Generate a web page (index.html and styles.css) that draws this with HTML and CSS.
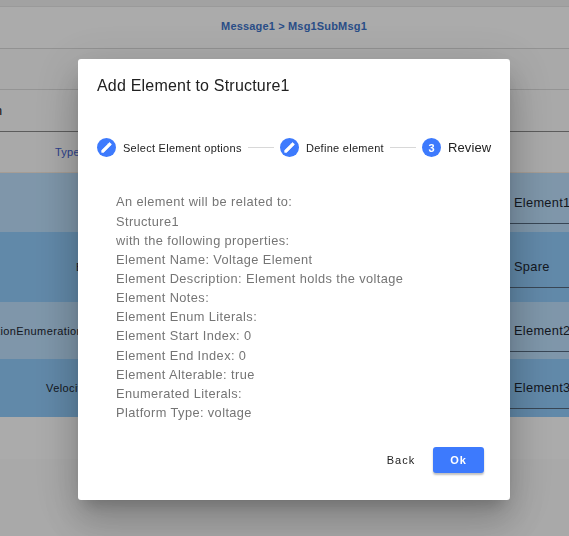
FILE: index.html
```html
<!DOCTYPE html>
<html lang="en">
<head>
<meta charset="utf-8">
<title>Add Element to Structure1</title>
<link rel="stylesheet" href="styles.css">
</head>
<body>
<main class="page">
  <div class="toolbar"></div>
  <nav class="breadcrumb">Message1 &gt; Msg1SubMsg1</nav>
  <div class="strip"></div>
  <div class="filter">n</div>
  <div class="head">Type</div>
  <div class="row r1"><span class="type"></span><span class="name">Element1</span></div>
  <div class="row dark r2"><span class="type">Boolean</span><span class="name">Spare</span></div>
  <div class="row r3"><span class="type">tionEnumeration</span><span class="name">Element2</span></div>
  <div class="row dark r4"><span class="type">Velocity</span><span class="name">Element3</span></div>
  <div class="after"></div>
</main>
<div class="backdrop">
  <section class="dialog" role="dialog">
    <h1>Add Element to Structure1</h1>
    <div class="stepper">
      <span class="dot"><svg viewBox="0 0 24 24"><path d="M3 17.25V21h3.75L19 8.75 15.25 5 3 17.25zM20.71 7.04a1 1 0 0 0 0-1.41l-2.34-2.34a1 1 0 0 0-1.41 0l-1.83 1.83 3.75 3.75 1.83-1.83z"/></svg></span>
      <span class="label select">Select Element options</span>
      <i class="line"></i>
      <span class="dot"><svg viewBox="0 0 24 24"><path d="M3 17.25V21h3.75L19 8.75 15.25 5 3 17.25zM20.71 7.04a1 1 0 0 0 0-1.41l-2.34-2.34a1 1 0 0 0-1.41 0l-1.83 1.83 3.75 3.75 1.83-1.83z"/></svg></span>
      <span class="label define">Define element</span>
      <i class="line"></i>
      <span class="dot">3</span>
      <span class="label current">Review</span>
    </div>
    <div class="review">
      <div>An element will be related to:</div>
      <div>Structure1</div>
      <div>with the following properties:</div>
      <div>Element Name: Voltage Element</div>
      <div>Element Description: Element holds the voltage</div>
      <div>Element Notes:</div>
      <div>Element Enum Literals:</div>
      <div>Element Start Index: 0</div>
      <div>Element End Index: 0</div>
      <div>Element Alterable: true</div>
      <div>Enumerated Literals:</div>
      <div>Platform Type: voltage</div>
    </div>
    <div class="actions"><button class="back">Back</button><button class="ok">Ok</button></div>
  </section>
</div>
</body>
</html>
```
FILE: styles.css
```css
* { box-sizing: border-box; }
body { margin: 0; height: 536px; overflow: hidden; font-family: "Liberation Sans", Arial, sans-serif; }
.page { height: 536px; background: #fafafa; overflow: hidden; }
.toolbar { height: 7px; background: #efefef; border-bottom: 1px solid #e4e4e4; }
.breadcrumb { height: 42px; padding-left: 19px; border-bottom: 1px solid #d8d8d8; background: #fdfdfd; color: #3e73c8; font-size: 11px; font-weight: bold; letter-spacing: .17px; line-height: 39px; text-align: center; }
.strip { height: 41px; border-bottom: 1px solid #dadada; }
.filter { height: 42px; border-bottom: 1px solid #888; color: #222; font-size: 12.8px; line-height: 42px; text-indent: -5px; }
.head { height: 41px; padding-left: 55px; border-bottom: 1px solid #f5e8dc; color: #4260d0; font-size: 11px; letter-spacing: .25px; line-height: 41px; }
.row { display: flex; height: 58px; background: #bbdefb; color: #1c2530; }
.dark { background: #90caf9; }
.r1 { height: 59px; }
.r2 { height: 70px; }
.r3 { height: 57px; }
.type { flex: 0 0 510px; font-size: 11px; letter-spacing: .4px; line-height: 58px; white-space: nowrap; }
.r2 .type { padding-left: 76px; line-height: 70px; }
.r3 .type { text-indent: -3px; }
.r4 .type { padding-left: 46px; }
.name { flex: 1; height: 51px; padding-left: 4px; border-bottom: 1px solid #53687e; font-size: 12.8px; letter-spacing: .3px; line-height: 59px; white-space: nowrap; }
.r2 .name { height: 56px; line-height: 70px; }
.r3 .name { height: 50px; line-height: 58px; }
.r4 .name { height: 50px; line-height: 58px; }
.after { height: 42px; background: #fdfdfd; }
.backdrop { position: fixed; inset: 0; padding: 59px 0 0 78px; background: rgba(0,0,0,.32); }
.dialog { width: 432px; height: 441px; padding: 17px 19px; border-radius: 3px; background: #fff; box-shadow: 0 11px 15px -7px rgba(0,0,0,.2), 0 24px 38px 3px rgba(0,0,0,.14), 0 9px 46px 8px rgba(0,0,0,.12); }
h1 { margin: 0; color: #212121; font-size: 16px; font-weight: normal; letter-spacing: .2px; line-height: 20px; }
.stepper { display: flex; align-items: center; height: 19px; margin-top: 42px; color: #222; white-space: nowrap; }
.dot { display: flex; flex: none; align-items: center; justify-content: center; width: 19px; height: 19px; border-radius: 50%; background: #3d7afd; color: #fff; font-size: 11px; font-weight: bold; }
.dot svg { width: 13px; height: 13px; fill: #fff; stroke: #fff; stroke-width: 1; stroke-linejoin: round; }
.label { flex: none; margin-left: 7px; font-size: 11px; letter-spacing: .28px; }
.select { width: 119px; }
.define { width: 78px; }
.current { font-size: 13px; letter-spacing: .1px; }
.line { flex: none; width: 26px; height: 1px; margin: 0 6px; background: #d8d8d8; }
.review { margin: 35.4px 0 0 19px; color: #757575; font-size: 12.8px; letter-spacing: .4px; line-height: 19.15px; white-space: nowrap; }
.actions { display: flex; justify-content: flex-end; margin: 24.6px 7px 0 0; }
button { height: 26px; padding: 0; border: 0; background: none; color: #222; font: 11px "Liberation Sans", Arial, sans-serif; letter-spacing: 1px; }
.back { width: 30px; margin-right: 17px; }
.ok { width: 51px; border-radius: 3px; background: #3d7afd; box-shadow: 0 2px 2px rgba(0,0,0,.25); color: #fff; font-weight: bold; }
```
